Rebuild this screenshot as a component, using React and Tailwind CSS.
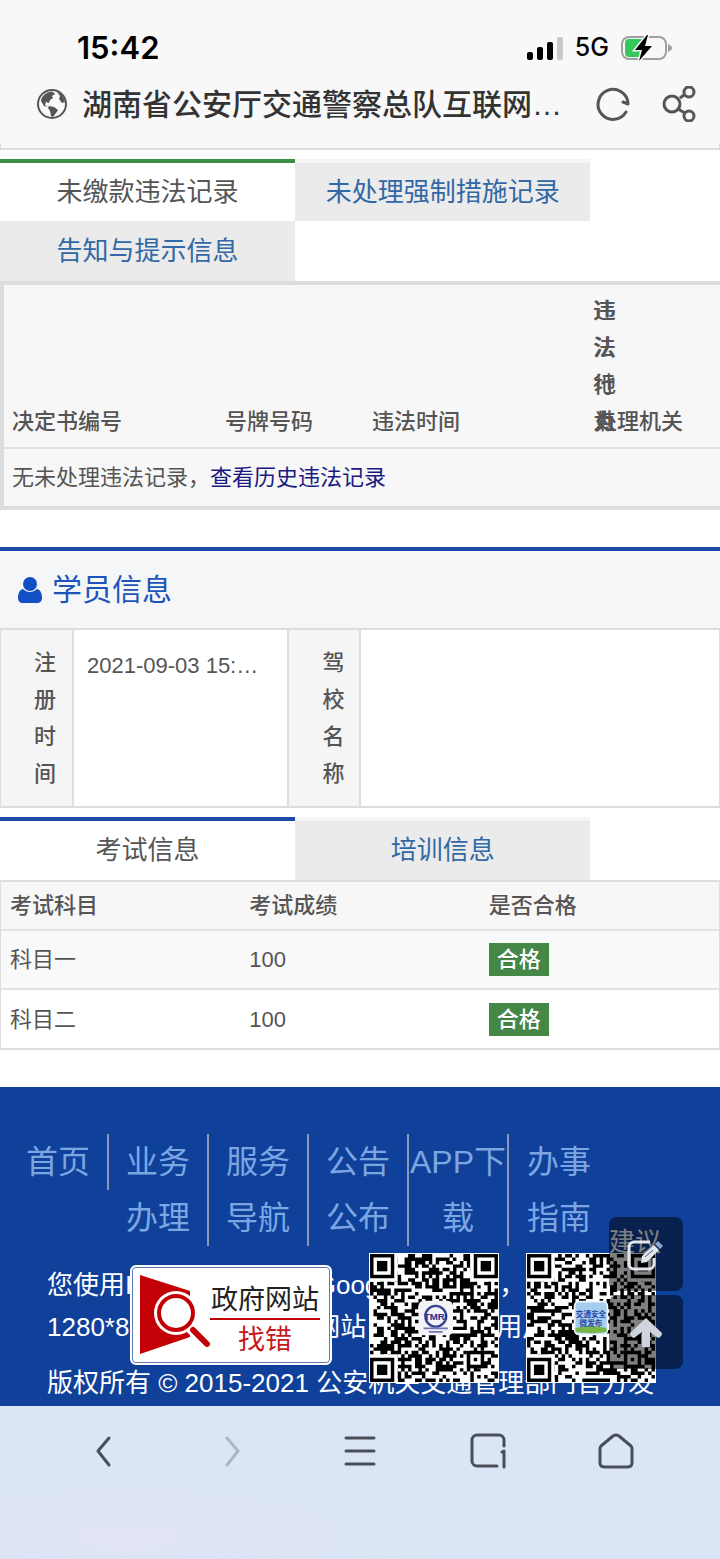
const CJK = "font-['Liberation_Sans','Noto_Sans_CJK_SC',sans-serif]";

function Finder({ x, y }) {
  return (
    <g>
      <rect x={x - 1} y={y - 1} width="9" height="9" fill="#fff" />
      <rect x={x} y={y} width="7" height="7" fill="#000" />
      <rect x={x + 1} y={y + 1} width="5" height="5" fill="#fff" />
      <rect x={x + 2} y={y + 2} width="3" height="3" fill="#000" />
    </g>
  );
}

// 37 x 37 modules, filled from a small seeded generator
function qrPath(seed) {
  let s = seed;
  let d = "";
  for (let y = 0; y < 37; y++) {
    for (let x = 0; x < 37; x++) {
      s = (s * 1103515245 + 12345) % 2147483648;
      if ((s >> 16) % 100 < 51) d += `M${x} ${y}h1v1h-1z`;
    }
  }
  return d;
}

const QR_LEFT = qrPath(20210);
const QR_RIGHT = qrPath(77123);

function QrCode({ path, label, children }) {
  return (
    <svg viewBox="-0.3 -0.3 37.6 37.6" className="size-[130px] bg-white" role="img" aria-label={label}>
      <path d={path} />
      <Finder x={0} y={0} />
      <Finder x={30} y={0} />
      <Finder x={0} y={30} />
      <rect x="28" y="28" width="5" height="5" />
      <rect x="29" y="29" width="3" height="3" fill="#fff" />
      <rect x="30" y="30" width="1" height="1" />
      {children}
    </svg>
  );
}

function StatusBar() {
  return (
    <div className="flex h-10 items-center justify-between pl-[77px] pr-12 font-['Inter',sans-serif] text-black">
      <span className="text-[31px] font-semibold">15:42</span>
      <div className="flex items-center gap-3">
        <svg className="h-[23px] w-9" viewBox="0 0 36 23">
          <rect x="0" y="15" width="6" height="8" rx="2" />
          <rect x="10" y="10" width="6" height="13" rx="2" />
          <rect x="20" y="5" width="6" height="18" rx="2" />
          <rect x="30" y="0" width="6" height="23" rx="2" fill="#c8c8ca" />
        </svg>
        <span className="text-[25px] font-medium">5G</span>
        <svg className="h-[26px] w-[51px]" viewBox="0 0 51 26">
          <rect x="1" y="2" width="44" height="22" rx="7" fill="none" stroke="#a0a0a2" strokeWidth="2" />
          <path d="M47 9c3 1 4 3 4 4s-1 3-4 4z" fill="#a0a0a2" />
          <path d="M8 4h13v18H8a4 4 0 0 1-4-4V8a4 4 0 0 1 4-4z" fill="#34c759" />
          <path d="M26 0 14 15h7l-3 11 13-15h-7l3-11z" stroke="#f8f8f9" strokeWidth="3" />
          <path d="M26 0 14 15h7l-3 11 13-15h-7l3-11z" />
        </svg>
      </div>
    </div>
  );
}

function AddressBar() {
  return (
    <div className="flex h-[72px] items-center pl-9 pr-[23px] text-[#333]">
      <svg className="size-8" viewBox="0 0 32 32">
        <circle cx="16" cy="16" r="14" fill="none" stroke="#555" strokeWidth="2" />
        <path d="M8 7c3-3 7-4 9-3l2 2-3 2 1 2-3 2-1 3-3-1-1 3 3 2-4-1-3-5c0-2 1-4 3-6zM21 4c5 2 7 5 8 10l-3 1-3-4 1-3zM13 18l5 1 4 3-2 3-3 4-2-1-1-5-2-3z" fill="#555" />
      </svg>
      <h1 className="ml-[14px] grow truncate text-[30px] font-medium">湖南省公安厅交通警察总队互联网…</h1>
      <button aria-label="刷新" className="mr-[30px]">
        <svg className="size-9" viewBox="0 0 36 36" fill="none" stroke="#555" strokeWidth="3" strokeLinecap="round" strokeLinejoin="round">
          <path d="M31 26A15 15 0 1 1 33 17M33 18l-5-2" />
        </svg>
      </button>
      <button aria-label="分享">
        <svg className="size-9" viewBox="0 0 36 36" fill="none" stroke="#555" strokeWidth="3">
          <circle cx="11" cy="18" r="8" />
          <circle cx="28" cy="6" r="5" />
          <circle cx="28" cy="30" r="5" />
          <path d="m19 12 4-3M17 23l7 4" />
        </svg>
      </button>
    </div>
  );
}

const tabBase = "w-[41%] text-[26px]";

function ViolationSection() {
  return (
    <section>
      <div role="tablist" className="flex flex-wrap">
        <button role="tab" aria-selected="true" className={`${tabBase} h-[62px] border-t-4 border-[#3c8f49] bg-white text-[#555]`}>
          未缴款违法记录
        </button>
        <button role="tab" aria-selected="false" className={`${tabBase} h-[62px] border-t-4 border-[#f5f5f5] bg-[#ebebeb] text-[#3168a5]`}>
          未处理强制措施记录
        </button>
        <button role="tab" aria-selected="false" className={`${tabBase} h-[60px] bg-[#ebebeb] text-[#3168a5]`}>
          告知与提示信息
        </button>
      </div>
      <div className="overflow-hidden border-y-4 border-l-4 border-[#ddd] bg-[#f7f7f7]">
        <table className="w-full table-fixed border-separate border-spacing-0 text-left text-[22px] leading-[37px] text-[#555]">
          <colgroup>
            <col className="w-[213px]" />
            <col className="w-[147px]" />
            <col className="w-[229px]" />
            <col className="w-px" />
            <col className="w-px" />
            <col />
          </colgroup>
          <thead>
            <tr className="align-bottom *:border-b-2 *:border-[#e2e2e2] *:py-[7px] *:font-medium">
              <th className="px-2">决定书编号</th>
              <th className="px-2">号牌号码</th>
              <th className="px-2">违法时间</th>
              <th>违法行为</th>
              <th>违法地点</th>
              <th>处理机关</th>
            </tr>
          </thead>
          <tbody>
            <tr>
              <td colSpan="6" className="px-2 py-[10px]">
                无未处理违法记录，
                <a href="#history" className="text-[#1a1a80]">查看历史违法记录</a>
              </td>
            </tr>
          </tbody>
        </table>
      </div>
    </section>
  );
}

function StudentSection() {
  return (
    <section className="mt-[37px] border-t-4 border-[#1d4ba6]">
      <h2 className="flex h-[77px] items-center bg-[#f5f6f7] pl-[18px] text-[30px] text-[#1c54bb]">
        <svg className="mr-[10px] h-[26px] w-6" viewBox="0 0 24 26" fill="#134fc4">
          <ellipse cx="12" cy="7" rx="7" ry="7" />
          <path d="M5 12c4 4 10 4 14 0 4 1 5 5 5 9 0 3-2 5-5 5H5c-3 0-5-2-5-5 0-4 1-8 5-9z" />
        </svg>
        学员信息
      </h2>
      <dl className="flex border-x border-y-2 border-[#ddd] text-[22px] leading-[37px] text-[#555]">
        <dt className="w-[73px] border-r-2 border-[#ddd] bg-[#f5f5f5] py-[14px] pl-[33px] pr-4 font-medium">注册时间</dt>
        <dd className="w-[30%] truncate border-r-2 border-[#ddd] px-[13px] pt-[17px]">2021-09-03 15:…</dd>
        <dt className="w-[72px] border-r-2 border-[#ddd] bg-[#f5f5f5] py-[14px] pl-[33px] pr-[15px] font-medium">驾校名称</dt>
        <dd className="grow" />
      </dl>
    </section>
  );
}

const exams = [
  { subject: "科目一", score: 100, result: "合格" },
  { subject: "科目二", score: 100, result: "合格" },
];

function ExamSection() {
  return (
    <section className="mt-[9px]">
      <div role="tablist" className="flex">
        <button role="tab" aria-selected="true" className={`${tabBase} h-[63px] border-t-4 border-[#1d4ba6] bg-white text-[#555]`}>
          考试信息
        </button>
        <button role="tab" aria-selected="false" className={`${tabBase} h-[63px] border-t-4 border-[#f5f5f5] bg-[#ebebeb] text-[#3168a5]`}>
          培训信息
        </button>
      </div>
      <div className="border-x border-y-2 border-[#ddd]">
        <table className="w-full table-fixed border-collapse text-left text-[22px] text-[#555]">
          <thead>
            <tr className="h-12 bg-[#f7f7f7] *:px-[9px] *:font-medium">
              <th>考试科目</th>
              <th>考试成绩</th>
              <th>是否合格</th>
            </tr>
          </thead>
          <tbody>
            {exams.map((exam) => (
              <tr key={exam.subject} className="h-[59px] border-t-2 border-[#e2e2e2] odd:bg-[#f9f9f9] *:px-[9px]">
                <td>{exam.subject}</td>
                <td>{exam.score}</td>
                <td>
                  <span className="inline-block bg-[#458746] px-2 font-medium text-white text-shadow-2xs">{exam.result}</span>
                </td>
              </tr>
            ))}
          </tbody>
        </table>
      </div>
    </section>
  );
}

const links = ["首页", "业务办理", "服务导航", "公告公布", "APP下载", "办事指南"];

function SiteFooter() {
  return (
    <footer className="relative mt-[37px] overflow-hidden bg-[#0f419b] pt-[47px] text-white">
      <nav className="ml-[9px] flex items-start text-center text-[32px] leading-[56px] text-[#7ba6e2]">
        {links.map((link) => (
          <a
            key={link}
            href="#nav"
            className={`w-[100px] border-r-2 border-[#8d97b3] last:border-r-0 ${link.startsWith("APP") ? "" : "px-4"}`}
          >
            {link}
          </a>
        ))}
      </nav>
      <div className="mt-[18px] whitespace-nowrap pb-[2px] pl-[47px] text-[26px] leading-[42px]">
        <p>
          您使用IE8.0及以上或者Google Chrome，1024*768
          <br />
          1280*800分辨率浏览本网站，获得更好用户体验
        </p>
        <p className="mt-[14px]">版权所有 © 2015-2021 公安机关交通管理部门官方发</p>
      </div>

      <a href="#report" className="absolute left-[130px] top-[178px] flex h-[100px] w-[202px] items-center rounded-md border-2 border-white bg-white pl-2 ring-1 ring-inset ring-[#5a78b5]">
        <svg className="h-20 w-[70px] shrink-0" viewBox="0 0 70 80">
          <path d="M0 0 50 16v46L0 79z" fill="#c30006" />
          <circle cx="36" cy="38" r="22" fill="#fff" />
          <circle cx="36" cy="38" r="17" fill="#fff" stroke="#c30006" strokeWidth="4" />
          <path d="m50 53 17 16" stroke="#fff" strokeWidth="10" />
          <path d="m53 55 14 14" stroke="#c30006" strokeWidth="6" strokeLinecap="round" />
        </svg>
        <span className="flex flex-col items-center pt-[10px] text-[27px] leading-9 text-[#222]">
          <span>政府网站</span>
          <span className="border-t-2 border-[#c30006] px-7 pt-0.5 text-[#c8171d]">找错</span>
        </span>
      </a>
      <div className="absolute left-[369px] top-[166px] flex gap-[27px]">
        <QrCode path={QR_LEFT} label="TMRI">
          <rect x="14" y="13.5" width="10" height="10" rx="1.5" fill="#f4f4f8" />
          <ellipse cx="19" cy="18" rx="3" ry="3" fill="none" stroke="#3c4595" strokeWidth="0.7" />
          <text x="19" y="19.2" textAnchor="middle" fontSize="2.8" fontWeight="700" fill="#262f86">TMRI</text>
          <path d="M15.5 21.5h7M17 22.5h4" stroke="#7077b0" strokeWidth="0.5" />
        </QrCode>
        <QrCode path={QR_RIGHT} label="交通安全微发布">
          <rect x="13.5" y="13.5" width="10" height="10" rx="1.5" fill="#eef5ff" />
          <rect x="14" y="14" width="9" height="9" rx="1" fill="#a5cdf0" />
          <path d="M14 21.5q4-1.5 9 0v1q-4 .8-9 0z" fill="#78b746" />
          <text x="18.5" y="18.3" textAnchor="middle" fontSize="2.2" fontWeight="700" fill="#2447a0">交通安全</text>
          <text x="18.5" y="20.9" textAnchor="middle" fontSize="2.2" fontWeight="700" fill="#2447a0">微发布</text>
        </QrCode>
      </div>
      <div className="absolute right-[37px] top-[130px] flex flex-col gap-1">
        <button aria-label="建议" className="relative h-[74px] w-[74px]">
          <span className="absolute left-0 top-[6px] text-[26px] text-white">建议</span>
          <span className="absolute inset-0 rounded-lg bg-black/50" />
          <svg className="absolute left-[18px] top-[22px] h-8 w-[38px]" viewBox="0 0 38 32" fill="none" stroke="#e2e6ee" strokeWidth="3">
            <path d="M23 3H7a5 5 0 0 0-5 5v17a5 5 0 0 0 5 5h15a5 5 0 0 0 5-5v-6" />
            <path d="m14 24 1-7L27 6l5 5-12 12z" fill="#e2e6ee" stroke="none" />
            <path d="m28 5 3-3 5 5-3 3z" fill="#8fa6cf" stroke="none" />
            <path d="m18 18 8-7" stroke="#4a5875" strokeWidth="1" />
          </svg>
        </button>
        <button aria-label="返回顶部" className="grid h-[74px] w-[74px] place-items-center rounded-lg bg-black/50">
          <svg className="h-[30px] w-8" viewBox="0 0 32 30" fill="#cfd3dd">
            <path d="M16 1 32 16q0 4-4 5l-8-6v15h-8V15l-8 6q-4-1-4-5z" />
          </svg>
        </button>
      </div>
    </footer>
  );
}

function BrowserBar() {
  const line = { fill: "none", stroke: "#4a4e58", strokeWidth: 3, strokeLinecap: "round", strokeLinejoin: "round" };
  return (
    <nav className="bg-[#dae6f5] bg-radial-[at_18%_85%] from-[#e1e4f6] to-[#dae6f5] to-40% px-10 pb-16">
      <div className="flex h-[90px] items-center *:grid *:flex-1 *:place-items-center">
        <button aria-label="后退">
          <svg className="size-9" viewBox="0 0 36 36" {...line}>
            <path d="M23 5 12 18l11 14" />
          </svg>
        </button>
        <button aria-label="前进" className="opacity-30">
          <svg className="size-9" viewBox="0 0 36 36" {...line}>
            <path d="m13 5 11 13-11 14" />
          </svg>
        </button>
        <button aria-label="菜单">
          <svg className="size-9" viewBox="0 0 36 36" {...line}>
            <path d="M4 5h28M4 18h28M4 31h28" />
          </svg>
        </button>
        <button aria-label="窗口">
          <svg className="size-9" viewBox="0 0 36 36" {...line}>
            <path d="M27 33H7a5 5 0 0 1-5-5V7a5 5 0 0 1 5-5h22a5 5 0 0 1 5 5v6M32 19l2-1v16" />
          </svg>
        </button>
        <button aria-label="主页">
          <svg className="size-9" viewBox="0 0 36 36" {...line}>
            <path d="M15 3q3-2 6 0l12 10q1 1 1 3v14q0 4-5 4H7q-5 0-5-4V16q0-2 1-3z" />
          </svg>
        </button>
      </div>
    </nav>
  );
}

export default function App() {
  return (
    <div className={`${CJK} overflow-x-hidden bg-white`}>
      <header className="bg-[#f8f8f9] pb-1 pt-7">
        <StatusBar />
        <AddressBar />
      </header>
      <main>
        <div className="mb-[9px] h-[6px] border-x border-b-2 border-[#ddd] bg-[#f8f8f9]" />
        <ViolationSection />
        <StudentSection />
        <ExamSection />
      </main>
      <SiteFooter />
      <BrowserBar />
    </div>
  );
}
